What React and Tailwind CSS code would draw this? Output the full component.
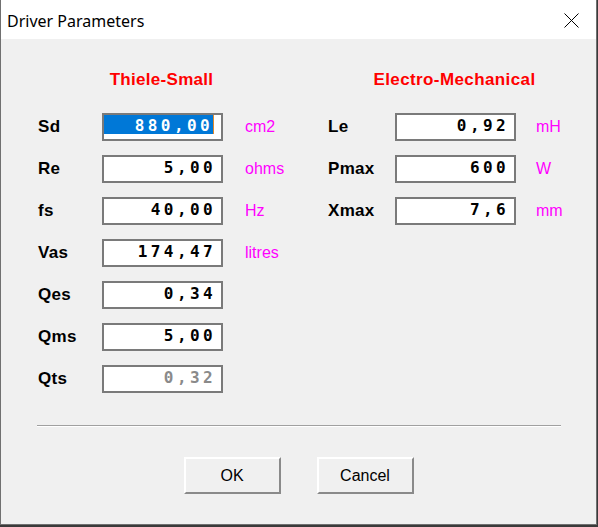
import React from "react";

const leftRows = [
  { label: "Sd", value: "880,00", unit: "cm2", selected: true },
  { label: "Re", value: "5,00", unit: "ohms" },
  { label: "fs", value: "40,00", unit: "Hz" },
  { label: "Vas", value: "174,47", unit: "litres" },
  { label: "Qes", value: "0,34", unit: "" },
  { label: "Qms", value: "5,00", unit: "" },
  { label: "Qts", value: "0,32", unit: "", disabled: true },
];

const rightRows = [
  { label: "Le", value: "0,92", unit: "mH" },
  { label: "Pmax", value: "600", unit: "W" },
  { label: "Xmax", value: "7,6", unit: "mm" },
];

function Field({ value, selected, disabled, width }) {
  return (
    <div
      className={`h-[28px] ${width} border-2 border-[#7a7a7a] bg-white flex items-start`}
    >
      {selected ? (
        <div className="flex-1 h-[19px] flex justify-end">
          <span className="flex-1 bg-[#0078d7] text-white text-right font-['DejaVu_Sans_Mono',monospace] font-bold text-[16px] leading-[19px] tracking-[3.4px] pt-[1px]">
            {value}
          </span>
          <span className="w-[1px] h-[19px] bg-[#e08a2c]"></span>
          <span className="w-[7px]"></span>
        </div>
      ) : (
        <div
          className={`flex-1 text-right font-['DejaVu_Sans_Mono',monospace] font-bold text-[16px] leading-[19px] tracking-[3.4px] pr-[5px] pt-[1px] ${
            disabled ? "text-[#8a8a8a]" : "text-black"
          }`}
        >
          {value}
        </div>
      )}
    </div>
  );
}

function Row({ row, labelW, boxW, unitGap }) {
  return (
    <div className="h-[28px] flex items-center">
      <div
        className={`${labelW} font-['Liberation_Sans',Arial,sans-serif] font-bold text-[17px] leading-[20px] tracking-[0.3px] text-black`}
      >
        {row.label}
      </div>
      <Field value={row.value} selected={row.selected} disabled={row.disabled} width={boxW} />
      <div
        className={`${unitGap} font-['Liberation_Sans',Arial,sans-serif] text-[16px] leading-[20px] text-[#ff00ff]`}
      >
        {row.unit}
      </div>
    </div>
  );
}

function Button({ children }) {
  return (
    <div className="w-[97px] h-[37px] bg-[#f0f0f0] border-2 border-t-white border-l-white border-b-[#8a8a8a] border-r-[#8a8a8a] flex items-center justify-center font-['Liberation_Sans',Arial,sans-serif] text-[16px] text-black">
      {children}
    </div>
  );
}

export default function App() {
  return (
    <div className="w-[598px] h-[527px] bg-[#3a3a3a] overflow-hidden">
      <div className="w-[597px] h-[525px] bg-[#f0f0f0] border-l border-r border-b border-[#707070] flex flex-col">
        {/* Title bar */}
        <div className="h-[39px] bg-white flex items-center justify-between shrink-0">
          <div className="pl-[6px] font-['Noto_Sans',sans-serif] text-[16px] leading-[20px] text-black pt-[2px]">
            Driver Parameters
          </div>
          <div className="pr-[17px] pt-[2px]">
            <svg width="15" height="15" viewBox="0 0 15 15">
              <path d="M0.5 0.5 L14.5 14.5 M14.5 0.5 L0.5 14.5" stroke="#000" strokeWidth="1" />
            </svg>
          </div>
        </div>

        {/* Body */}
        <div className="flex-1 flex flex-col">
          <div className="flex pl-[37px] pt-[31px]">
            {/* Left column */}
            <div className="w-[290px] flex flex-col">
              <div className="w-[247px] h-[20px] text-center font-['Liberation_Sans',Arial,sans-serif] font-bold text-[17px] leading-[20px] tracking-[0.3px] text-[#ff0000]">
                Thiele-Small
              </div>
              <div className="mt-[23px] flex flex-col gap-[14px]">
                {leftRows.map((r) => (
                  <Row key={r.label} row={r} labelW="w-[64px]" boxW="w-[121px]" unitGap="ml-[22px]" />
                ))}
              </div>
            </div>
            {/* Right column */}
            <div className="w-[253px] flex flex-col">
              <div className="w-[253px] h-[20px] text-center font-['Liberation_Sans',Arial,sans-serif] font-bold text-[17px] leading-[20px] tracking-[0.4px] text-[#ff0000]">
                Electro-Mechanical
              </div>
              <div className="mt-[23px] flex flex-col gap-[14px]">
                {rightRows.map((r) => (
                  <Row key={r.label} row={r} labelW="w-[67px]" boxW="w-[121px]" unitGap="ml-[20px]" />
                ))}
              </div>
            </div>
          </div>

          {/* Separator */}
          <div className="ml-[36px] mt-[32px] w-[524px] h-[2px] flex flex-col">
            <div className="h-[1px] bg-[#a0a0a0]"></div>
            <div className="h-[1px] bg-white"></div>
          </div>

          {/* Buttons */}
          <div className="mt-[30px] flex justify-center gap-[36px]">
            <Button>OK</Button>
            <Button>Cancel</Button>
          </div>
        </div>
      </div>
    </div>
  );
}
